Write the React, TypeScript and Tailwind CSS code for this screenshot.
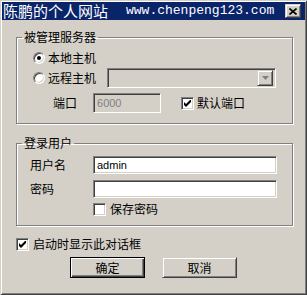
import React from 'react'

const sunken =
  'border border-t-[#808080] border-l-[#808080] border-b-white border-r-white shadow-[inset_1px_1px_0_#404040,inset_-1px_-1px_0_#d4d0c8]'
const raised =
  'border border-t-[#d4d0c8] border-l-[#d4d0c8] border-b-[#404040] border-r-[#404040] shadow-[inset_1px_1px_0_#fff,inset_-1px_-1px_0_#808080]'
const groupBox =
  'border border-[#808080] shadow-[inset_1px_1px_0_#fff,1px_1px_0_#fff] ml-[16px] w-[277px] min-w-0'

const Check: React.FC<{ checked?: boolean }> = ({ checked }) => (
  <span className={`${sunken} w-[13px] h-[13px] bg-white flex items-center justify-center shrink-0`}>
    {checked && (
      <svg width="7" height="7" viewBox="0 0 7 7">
        <path d="M0 2 L2 4 L7 -1 V2 L2 7 L0 5 Z" fill="#000" />
      </svg>
    )}
  </span>
)

const Radio: React.FC<{ checked?: boolean }> = ({ checked }) => (
  <span
    className={`${sunken} rounded-full w-[12px] h-[12px] bg-white flex items-center justify-center shrink-0`}
  >
    {checked && <span className="w-[4px] h-[4px] rounded-full bg-black" />}
  </span>
)

const Legend: React.FC<{ children: React.ReactNode }> = ({ children }) => (
  <legend className="ml-[5px] px-[2px] leading-[14px]">{children}</legend>
)

export default function App() {
  return (
    <div className="w-[307px] h-[295px] bg-[#d4d0c8] text-black text-[12px] leading-[14px] font-['Noto_Sans_CJK_SC',sans-serif] shadow-[inset_1px_1px_0_#d4d0c8,inset_-1px_-1px_0_#404040,inset_2px_2px_0_#fff,inset_-2px_-2px_0_#808080] overflow-hidden">
      <header className="mt-[2px] mx-[2px] h-[18px] bg-[#0a246a] flex items-center text-white">
        <span className="pl-[1px] text-[15px] leading-[18px]">陈鹏的个人网站</span>
        <span className="ml-[18px] text-[13px] leading-[18px] font-['Liberation_Mono',monospace]">
          www.chenpeng123.com
        </span>
        <button className={`${raised} ml-auto mr-[4px] w-[16px] h-[14px] bg-[#d4d0c8] flex items-center justify-center`}>
          <svg width="8" height="7" viewBox="0 0 8 7">
            <path d="M0.5 0.5 L7.5 6.5 M7.5 0.5 L0.5 6.5" stroke="#000" strokeWidth="1.6" />
          </svg>
        </button>
      </header>

      <fieldset className={`${groupBox} mt-[10px]`}>
        <Legend>被管理服务器</Legend>
        <div className="pt-[4px] pb-[10px]">
          <div className="h-[20px] flex items-center pl-[16px]">
            <Radio checked />
            <span className="ml-[3px]">本地主机</span>
          </div>
          <div className="h-[20px] flex items-center pl-[16px]">
            <Radio />
            <span className="ml-[3px]">远程主机</span>
            <div className={`${sunken} ml-[11px] w-[169px] h-[20px] bg-[#d4d0c8] flex items-center justify-end pr-[2px]`}>
              <span className={`${raised} w-[16px] h-[16px] bg-[#d4d0c8] flex items-center justify-center`}>
                <svg width="7" height="4" viewBox="0 0 7 4">
                  <path d="M0 0 H7 L3.5 4 Z" fill="#808080" />
                </svg>
              </span>
            </div>
          </div>
          <div className="mt-[5px] h-[20px] flex items-center pl-[36px]">
            <span>端口</span>
            <div className={`${sunken} ml-[16px] w-[68px] h-[20px] bg-[#d4d0c8] flex items-center pl-[3px] text-[#808080] font-['Liberation_Sans',sans-serif] text-[11px]`}>
              6000
            </div>
            <span className="ml-[20px]">
              <Check checked />
            </span>
            <span className="ml-[3px]">默认端口</span>
          </div>
        </div>
      </fieldset>

      <fieldset className={`${groupBox} mt-[12px]`}>
        <Legend>登录用户</Legend>
        <div className="pt-[6px] pb-[9px]">
          <div className="h-[18px] flex items-center pl-[13px]">
            <span className="w-[63px]">用户名</span>
            <div className={`${sunken} w-[184px] h-[18px] bg-white flex items-center pl-[3px] font-['Liberation_Sans',sans-serif] text-[11px]`}>
              admin
            </div>
          </div>
          <div className="mt-[6px] h-[18px] flex items-center pl-[13px]">
            <span className="w-[63px]">密码</span>
            <div className={`${sunken} w-[184px] h-[18px] bg-white`} />
          </div>
          <div className="mt-[4px] h-[14px] flex items-center pl-[76px]">
            <Check />
            <span className="ml-[4px]">保存密码</span>
          </div>
        </div>
      </fieldset>

      <div className="mt-[11px] h-[14px] flex items-center pl-[16px]">
        <Check checked />
        <span className="ml-[4px]">启动时显示此对话框</span>
      </div>

      <div className="mt-[6px] flex">
        <button className="ml-[70px] w-[75px] h-[21px] border border-black bg-[#d4d0c8] shadow-[inset_1px_1px_0_#fff,inset_-1px_-1px_0_#404040,inset_-2px_-2px_0_#808080] flex items-center justify-center">
          确定
        </button>
        <button className={`${raised} ml-[17px] w-[75px] h-[21px] bg-[#d4d0c8] flex items-center justify-center`}>
          取消
        </button>
      </div>
    </div>
  )
}
